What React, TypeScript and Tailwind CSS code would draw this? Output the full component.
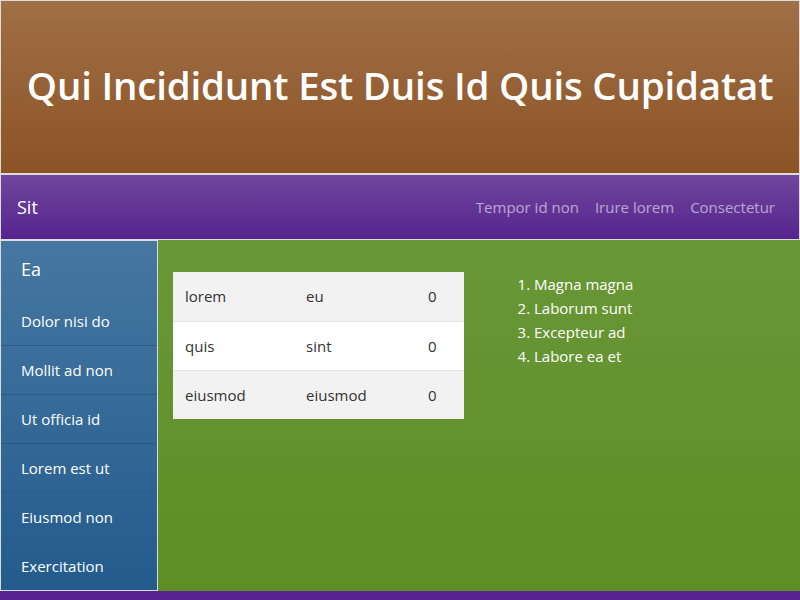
import React from "react";

const sideItems = ["Dolor nisi do", "Mollit ad non", "Ut officia id", "Lorem est ut", "Eiusmod non", "Exercitation"];
const navLinks = ["Tempor id non", "Irure lorem", "Consectetur"];
const rows = [
  ["lorem", "eu", "0"],
  ["quis", "sint", "0"],
  ["eiusmod", "eiusmod", "0"],
];
const listItems = ["Magna magna", "Laborum sunt", "Excepteur ad", "Labore ea et"];

export default function App() {
  return (
    <div className="w-[800px] h-[600px] overflow-hidden flex flex-col font-['Open_Sans',sans-serif]">
      {/* Header */}
      <header className="h-[174px] border border-[#dcdcdc] bg-gradient-to-b from-[#a06f46] to-[#8c5325] flex items-center justify-center">
        <h1 className="text-white text-[38.5px] font-semibold tracking-[-0.2px] -mt-[2px]">
          Qui Incididunt Est Duis Id Quis Cupidatat
        </h1>
      </header>

      {/* Nav */}
      <nav className="h-[66px] border border-[#dcdcdc] bg-gradient-to-b from-[#70459d] to-[#55238d] flex items-center justify-between pl-4 pr-6">
        <span className="text-white text-[18px]">Sit</span>
        <div className="flex gap-[16px] text-[15px] text-white/55">
          {navLinks.map((l) => (
            <a key={l}>{l}</a>
          ))}
        </div>
      </nav>

      {/* Body */}
      <div className="flex h-[351px]">
        <aside className="w-[158px] border border-[#dcdcdc] bg-gradient-to-b from-[#4677a1] to-[#235b8d] text-white flex flex-col">
          <div className="h-[56px] flex items-center px-5 text-[18px]">Ea</div>
          {sideItems.map((s, i) => (
            <div
              key={s}
              className={`h-[48px] flex items-center px-5 text-[15px] ${i > 0 ? "h-[49px] border-t border-[#2b5a85]" : ""}`}
            >
              {s}
            </div>
          ))}
        </aside>

        <main className="flex-1 bg-gradient-to-b from-[#6a9737] to-[#5e8d25] flex items-start pt-8 pl-[15px]">
          <div className="w-[291px] text-[15px] text-[#333]">
            {rows.map((r, i) => (
              <div
                key={i}
                className={`grid grid-cols-[121px_122px_48px] items-center ${i === 1 ? "bg-white" : "bg-[#f2f2f2]"} ${i > 0 ? "h-[49px] border-t border-[#dee2e6]" : "h-[49px]"}`}
              >
                {r.map((c, j) => (
                  <div key={j} className="px-3">
                    {c}
                  </div>
                ))}
              </div>
            ))}
          </div>
          <ol className="list-decimal ml-[54px] pl-[16px] text-white text-[15px] leading-[24px]">
            {listItems.map((l) => (
              <li key={l}>{l}</li>
            ))}
          </ol>
        </main>
      </div>

      <footer className="h-[9px] bg-[#57238e]" />
    </div>
  );
}
